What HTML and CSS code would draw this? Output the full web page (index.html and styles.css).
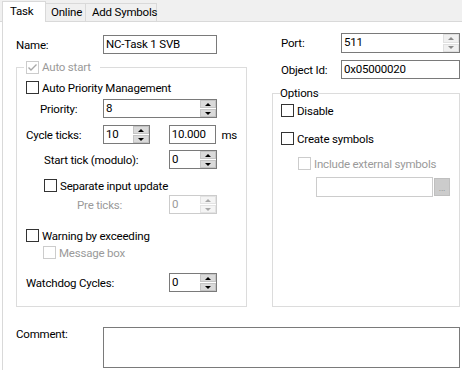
FILE: index.html
```html
<!DOCTYPE html>
<html lang="en">
<head>
    <meta charset="UTF-8">
    <title>Task</title>
    <link rel="stylesheet" href="styles.css">
</head>
<body>
    <div class="tabs">
        <div class="tab active">Task</div>
        <div class="tab tab-online">Online</div>
        <div class="tab tab-symbols">Add Symbols</div>
    </div>

    <div class="panel">
        <div class="columns">
            <div class="col-left">
                <div class="row field-row">
                    <span class="lbl w-name">Name:</span>
                    <div class="text w-name-input">NC-Task 1 SVB</div>
                </div>

                <fieldset class="group task-group">
                    <legend>
                        <span class="check disabled">
                            <svg width="11" height="11" viewBox="0 0 11 11"><polyline points="1.5,5.5 4,8 9.5,2.5" fill="none" stroke="#a8a8a8" stroke-width="1.4"/></svg>
                        </span>
                        <span class="dim">Auto start</span>
                    </legend>

                    <div class="row check-row r-apm">
                        <span class="check"></span>
                        <span>Auto Priority Management</span>
                    </div>

                    <div class="row field-row r-priority">
                        <span class="lbl w-priority">Priority:</span>
                        <div class="spin w-wide">
                            <span class="val">8</span>
                            <div class="spin-btns"><span class="up"></span><span class="down"></span></div>
                        </div>
                    </div>

                    <div class="row field-row r-cycle">
                        <span class="lbl w-cycle">Cycle ticks:</span>
                        <div class="spin w-cycle-spin">
                            <span class="val">10</span>
                            <div class="spin-btns"><span class="up"></span><span class="down"></span></div>
                        </div>
                        <div class="text w-small ms-box">10.000</div>
                        <span class="unit">ms</span>
                    </div>

                    <div class="row field-row r-start">
                        <span class="lbl w-start">Start tick (modulo):</span>
                        <div class="spin w-small">
                            <span class="val">0</span>
                            <div class="spin-btns"><span class="up"></span><span class="down"></span></div>
                        </div>
                    </div>

                    <div class="row check-row r-separate">
                        <span class="check"></span>
                        <span>Separate input update</span>
                    </div>

                    <div class="row field-row r-pre">
                        <span class="lbl w-pre dim">Pre ticks:</span>
                        <div class="spin w-small disabled">
                            <span class="val">0</span>
                            <div class="spin-btns"><span class="up"></span><span class="down"></span></div>
                        </div>
                    </div>

                    <div class="row check-row r-warning">
                        <span class="check"></span>
                        <span>Warning by exceeding</span>
                    </div>

                    <div class="row check-row r-message">
                        <span class="check disabled"></span>
                        <span class="dim">Message box</span>
                    </div>

                    <div class="row field-row r-watchdog">
                        <span class="lbl w-watchdog">Watchdog Cycles:</span>
                        <div class="spin w-small">
                            <span class="val">0</span>
                            <div class="spin-btns"><span class="up"></span><span class="down"></span></div>
                        </div>
                    </div>
                </fieldset>
            </div>

            <div class="col-right">
                <div class="row field-row r-port">
                    <span class="lbl w-port">Port:</span>
                    <div class="spin soft w-right">
                        <span class="val">511</span>
                        <div class="spin-btns"><span class="up"></span><span class="down"></span></div>
                    </div>
                </div>

                <div class="row field-row r-objid">
                    <span class="lbl w-port">Object Id:</span>
                    <div class="text w-right">0x05000020</div>
                </div>

                <fieldset class="group options-group">
                    <legend>Options</legend>

                    <div class="row check-row r-disable">
                        <span class="check"></span>
                        <span>Disable</span>
                    </div>

                    <div class="row check-row r-create">
                        <span class="check"></span>
                        <span>Create symbols</span>
                    </div>

                    <div class="row check-row r-include">
                        <span class="check disabled"></span>
                        <span class="dim">Include external symbols</span>
                    </div>

                    <div class="row r-path">
                        <div class="text disabled w-path"></div>
                        <div class="browse">...</div>
                    </div>
                </fieldset>
            </div>
        </div>

        <div class="comment-row">
            <span class="lbl w-name">Comment:</span>
            <div class="comment-box"></div>
        </div>
    </div>
</body>
</html>
```

FILE: styles.css
```css
body {
    margin: 0;
    background-color: #fff;
    font-family: Roboto, "Liberation Sans", sans-serif;
    font-size: 11.5px;
    letter-spacing: -0.2px;
    color: #000;
}

/* tab strip */
.tabs {
    display: flex;
    align-items: flex-end;
    height: 21px;
    padding-left: 2px;
    background-color: #f0f0f0;
    border-bottom: 1px solid #d9d9d9;
}

.tab {
    height: 18px;
    padding: 0 0 0 5px;
    line-height: 17px;
    background-color: #f0f0f0;
    border: 1px solid #d9d9d9;
    border-bottom: none;
    border-left: none;
    box-sizing: border-box;
    white-space: nowrap;
}

.tab-online {
    width: 40px;
}

.tab-symbols {
    width: 71px;
    padding-left: 6px;
}

.tab.active {
    height: 21px;
    margin-bottom: -1px;
    padding: 0 0 0 7px;
    line-height: 18px;
    background-color: #fff;
    border-left: 1px solid #d9d9d9;
    width: 44px;
}

/* main panel */
.panel {
    margin-left: 2px;
    padding: 0 0 0 13px;
    border-left: 1px solid #d9d9d9;
    height: 348px;
}

.columns {
    display: flex;
    gap: 25px;
}

.col-left {
    width: 231px;
    padding-top: 13px;
}

.col-right {
    width: 188px;
    padding-top: 11px;
    display: flex;
    flex-direction: column;
}

.row {
    display: flex;
    align-items: center;
}

.field-row {
    height: 19px;
}

.check-row {
    height: 15px;
}

.lbl {
    flex: none;
}

.dim {
    color: #9a9a9a;
}

/* widgets */
.check {
    width: 13px;
    height: 13px;
    box-sizing: border-box;
    border: 1px solid #333;
    background-color: #fff;
    margin-right: 3px;
    flex: none;
    display: flex;
    align-items: center;
    justify-content: center;
}

.check.disabled {
    border-color: #cccccc;
}

.text {
    height: 19px;
    box-sizing: border-box;
    border: 1px solid #7a7a7a;
    background-color: #fff;
    padding-left: 2px;
    line-height: 17px;
    white-space: nowrap;
}

.text.disabled {
    border-color: #cccccc;
}

.spin {
    display: flex;
    height: 19px;
    box-sizing: border-box;
    border: 1px solid #7a7a7a;
    background-color: #fff;
}

.spin .val {
    flex: 1;
    padding-left: 2px;
    line-height: 17px;
}

.spin-btns {
    width: 16px;
    display: flex;
    flex-direction: column;
    gap: 1px;
    background-color: #fff;
}

.spin-btns span {
    flex: 1;
    display: flex;
    align-items: center;
    justify-content: center;
    background-color: #dadada;
    border: 1px solid #c4c4c4;
}

.spin-btns .up::after,
.spin-btns .down::after {
    content: '';
    border-left: 3px solid transparent;
    border-right: 3px solid transparent;
}

.spin-btns .up::after {
    border-bottom: 3px solid #000;
}

.spin-btns .down::after {
    border-top: 3px solid #000;
}

.spin.soft .spin-btns span {
    background-color: #f0f0f0;
    border-color: #e0e0e0;
}

.spin.soft .up::after {
    border-bottom-color: #8a8a8a;
}

.spin.soft .down::after {
    border-top-color: #8a8a8a;
}

.spin.disabled {
    border-color: #cccccc;
}

.spin.disabled .val {
    color: #9a9a9a;
}

.spin.disabled .spin-btns span {
    background-color: #f4f4f4;
    border-color: #e3e3e3;
}

.spin.disabled .up::after {
    border-bottom-color: #a8a8a8;
}

.spin.disabled .down::after {
    border-top-color: #a8a8a8;
}

/* group boxes */
.group {
    margin: 0;
    border: 1px solid #dcdcdc;
    min-width: 0;
    box-sizing: border-box;
}

.group legend {
    height: 14px;
    line-height: 14px;
    padding: 0;
}

.task-group {
    margin-top: 6px;
    padding: 6px 9px 14px 9px;
}

.task-group legend {
    display: flex;
    align-items: center;
    margin-left: -2px;
    padding: 0 9px 0 2px;
}

.options-group {
    flex: 1;
    margin-top: 7px;
    padding: 3px 8px 0 8px;
}

.options-group legend {
    margin-left: -1px;
}

/* row offsets, left group */
.r-apm { margin-top: 0; }
.r-priority { margin-top: 4px; margin-left: 14px; }
.r-cycle { margin-top: 7px; }
.r-start { margin-top: 6px; margin-left: 18px; }
.r-separate { margin-top: 9px; margin-left: 18px; }
.r-pre { margin-top: 2px; margin-left: 51px; }
.r-warning { margin-top: 14px; }
.r-message { margin-top: 2px; margin-left: 17px; }
.r-watchdog { margin-top: 13px; }

.w-name { width: 87px; }
.w-name-input { width: 114px; }
.w-priority { width: 63px; }
.w-wide { width: 114px; }
.w-cycle { width: 77px; }
.w-cycle-spin { width: 47px; }
.w-small { width: 48px; }
.w-start { width: 125px; }
.w-pre { width: 92px; }
.w-watchdog { width: 143px; }

.ms-box {
    margin-left: 19px;
}

.unit {
    margin-left: 5px;
}

/* right column */
.r-port {
    height: 20px;
    padding-left: 9px;
}

.r-port .spin {
    height: 20px;
}

.r-objid {
    margin-top: 7px;
    padding-left: 9px;
}

.w-port { width: 60px; }
.w-right { width: 119px; }

.r-create { margin-top: 13px; }
.r-include { margin-top: 10px; margin-left: 17px; }

.r-path {
    margin-top: 6px;
    margin-left: 35px;
    height: 20px;
}

.w-path {
    width: 117px;
    height: 20px;
}

.browse {
    width: 16px;
    height: 18px;
    margin-left: 1px;
    box-sizing: border-box;
    background-color: #cccccc;
    border: 1px solid #bfbfbf;
    color: #8a8a8a;
    font-size: 9px;
    line-height: 18px;
    text-align: center;
}

/* comment */
.comment-row {
    display: flex;
    margin-top: 20px;
    line-height: 14px;
}

.comment-box {
    width: 357px;
    height: 41px;
    box-sizing: border-box;
    border: 1px solid #7a7a7a;
    background-color: #fff;
}
```
